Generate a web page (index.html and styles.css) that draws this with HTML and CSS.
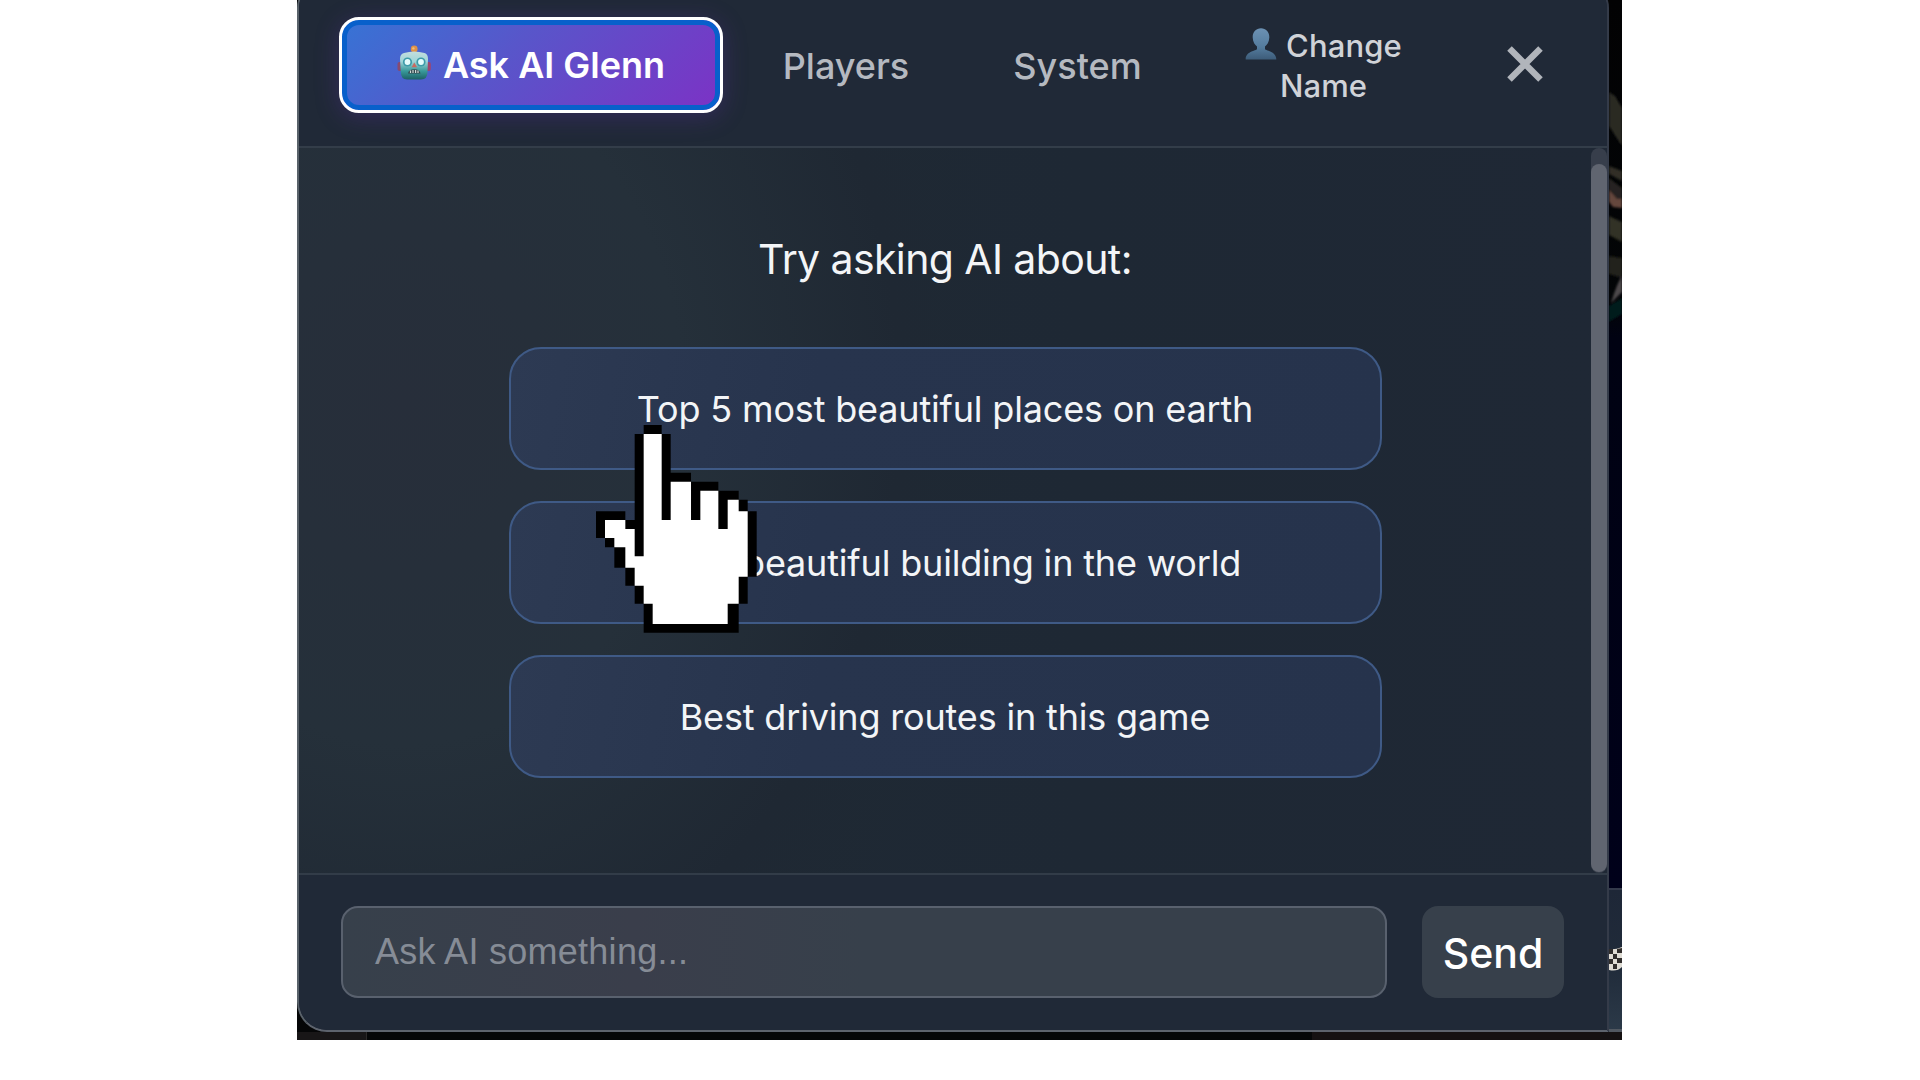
FILE: index.html
```html
<!DOCTYPE html>
<html lang="en">
<head>
<meta charset="utf-8">
<title>Ask AI Glenn</title>
<link rel="stylesheet" href="styles.css">
</head>
<body>
<div class="stage">
  <main class="panel">
    <header class="tabs">
      <button class="tab tab-active">
        <svg class="robot" viewBox="0 0 34 36" width="34" height="36">
          <defs>
            <linearGradient id="face" x1="0" y1="0" x2="0" y2="1"><stop offset="0" stop-color="#c3dedd"/><stop offset=".35" stop-color="#a0d5d8"/><stop offset=".7" stop-color="#38999a"/><stop offset="1" stop-color="#1d6164"/></linearGradient>
          </defs>
          <rect x="15.3" y="5" width="4" height="5" fill="#9b6543"/>
          <circle cx="17.2" cy="4" r="3.4" fill="#dd9148"/><circle cx="16.4" cy="3.4" r="1.2" fill="#f5bd77"/>
          <rect x=".5" y="17" width="5" height="9" rx="2" fill="#874a70"/>
          <rect x="28.8" y="17" width="5" height="9" rx="2" fill="#a0446c"/>
          <path d="M7 8Q17 5 27.500 8Q31 9 31 14L30.500 27Q30.500 34.500 24 34.500H10Q4 34.500 3.800 27L3 14Q3 9 7 8Z" fill="url(#face)"/>
          <circle cx="10.500" cy="17" r="4.600" fill="#3d9ba8"/><circle cx="24" cy="17" r="4.600" fill="#3d9ba8"/>
          <circle cx="10.500" cy="17" r="2.900" fill="#e5fcfc"/><circle cx="24" cy="17" r="2.900" fill="#e5fcfc"/>
          <path d="M17.300 17.500L20 22.200H14.600Z" fill="#c96961"/>
          <path d="M11 28.500Q12 24.300 17.300 24.300T23.500 28.500Z" fill="#34494f"/>
          <path d="M13.500 25.500v2.400M16 25v2.900M18.600 25v2.900M21 25.500v2.400" stroke="#cfdcd8" stroke-width="1.200"/>
        </svg>
        <span>Ask AI Glenn</span>
      </button>
      <button class="tab"><span>Players</span></button>
      <button class="tab"><span>System</span></button>
      <button class="tab tab-name">
        <span class="name-row">
          <svg viewBox="0 0 32 32" width="32" height="32">
            <defs><linearGradient id="bust" x1="0" y1="0" x2="0" y2="1"><stop offset="0" stop-color="#6c91b3"/><stop offset=".6" stop-color="#547c9e"/><stop offset="1" stop-color="#3d5c79"/></linearGradient></defs>
            <path d="M16 .3C21 .3 24.500 4 24.300 9.500C24.200 14 22 17 20 18.500V21C20.500 23 31.500 23 31.300 31.500H.7C.5 23 11.500 23 12 21V18.500C10 17 7.800 14 7.700 9.500C7.500 4 11 .3 16 .3Z" fill="url(#bust)"/>
          </svg>
          <span>Change</span>
        </span>
        <span>Name</span>
      </button>
      <button class="close" aria-label="Close">
        <svg viewBox="0 0 36 36" width="36" height="36"><path d="M2.500 2.500L33.500 33.500M33.500 2.500L2.500 33.500" stroke="#b1b5bb" stroke-width="6.400"/></svg>
      </button>
    </header>
    <section class="chat">
      <div class="prompts">
        <h2>Try asking AI about:</h2>
        <button class="prompt"><span>Top 5 most beautiful places on earth</span></button>
        <button class="prompt"><span>Most beautiful building in the world</span></button>
        <button class="prompt"><span>Best driving routes in this game</span></button>
      </div>
      <div class="scroll"><div class="thumb"></div></div>
    </section>
    <footer class="composer">
      <div class="field"><span>Ask AI something...</span></div>
      <button class="send"><span>Send</span></button>
    </footer>
  </main>
  <aside class="scene">
    <svg class="rocks" viewBox="0 0 13 888" width="13" height="888">
      <defs>
        <linearGradient id="night" x1="0" y1="0" x2="0" y2="1"><stop offset="0" stop-color="#020203"/><stop offset=".34" stop-color="#030507"/><stop offset=".38" stop-color="#000212"/><stop offset="1" stop-color="#00011a"/></linearGradient>
        <filter id="soft"><feGaussianBlur stdDeviation="1"/></filter>
      </defs>
      <rect width="13" height="888" fill="url(#night)"/>
      <g filter="url(#soft)">
        <path d="M0 92L6 96L13 108V146L0 126Z" fill="#2a2924"/>
        <path d="M0 166L13 171V181L0 174Z" fill="#302f28"/>
        <path d="M0 178L13 188V202L0 194Z" fill="#252420"/>
        <path d="M0 190L8 199L13 199V208L4 207L0 202Z" fill="#65463e"/>
        <path d="M0 216L13 222V242L0 235Z" fill="#303025"/>
        <path d="M0 256L13 258V278L0 274Z" fill="#20211a"/>
        <path d="M13 276Q8 283 2 303L13 292Z" fill="#4d484b"/>
        <path d="M0 306L13 298V314L0 322Z" fill="#041a1e"/>
      </g>
    </svg>
    <div class="hud">
      <svg viewBox="0 0 13 26" width="13" height="26">
        <path d="M0 2Q6 3 13 0V20Q8 25 0 23Z" fill="#dedbd3"/>
        <path d="M0 2h4v5H0ZM8 2l5-1v5H8ZM4 7h4v5H4ZM0 12h4v5H0ZM8 11h5v5H8ZM4 17h4v5H4Z" fill="#302d2c"/>
      </svg>
    </div>
  </aside>
  <div class="ground"><i></i><b></b></div>
  <svg class="pointer" viewBox="49 76 482 623">
    <path d="M192 76H246V103H273V219H334V246H416V273H477V300H504V335H531V531H504V612H477V699H192V612H165V558H137V504H104V443H76V415H49V335H137V361H165V103H192Z" fill="#000"/>
    <path d="M192 103H246V361H273V246H334V361H362V273H416V388H444V300H477V335H504V531H477V612H444V673H219V612H192V558H165V504H137V443H104V415H76V361H137V388H165V470H192Z" fill="#fff"/>
  </svg>
</div>
</body>
</html>
```
FILE: styles.css
```css
* { box-sizing: border-box; }
body { margin: 0; height: 1080px; background: #fff; overflow: hidden; font-family: Inter, "Liberation Sans", sans-serif; }
button { font: inherit; border: 0; padding: 0; margin: 0; background: none; color: inherit; }
span { white-space: nowrap; }
svg { display: block; flex: none; }
.stage { position: relative; width: 1325px; height: 1040px; margin-left: 297px; overflow: hidden; background: #050607; display: grid; grid-template-columns: 1312px 13px; grid-template-rows: 1032px 8px; }
.panel { height: 1052px; margin-top: -20px; border: 2px solid #4a525e; border-left-color: #59626a; border-bottom-color: #5d636d; border-right-color: #343b49; border-radius: 28px 28px 0 30px; background: #202937; overflow: hidden; display: grid; grid-template-rows: 166px 725px 1fr; }
.tabs { border-bottom: 2px solid #333d49; padding: 18px 0 0 40px; display: grid; grid-template-columns: 384px 246px 217px 275px 127px; background: #202937; }
.tab { height: 94px; margin-top: 19px; display: flex; align-items: center; justify-content: center; font-size: 36px; font-weight: 500; line-height: 44px; color: #b5b9c0; }
.tab-active { margin-top: 17px; height: 96px; border: 3px solid #fff; border-radius: 20px; color: #fff; font-weight: 600; background: linear-gradient(135deg, #3674d5 0%, #5856ca 42%, #7c32c5 100%); box-shadow: inset 0 0 0 5px #0860cb, 0 4px 24px rgba(100, 50, 180, .3); gap: 12px; }
.robot { margin-top: -5px; }
.tab-name { flex-direction: column; font-size: 31px; line-height: 40.5px; color: #d0d3d8; }
.name-row { display: flex; gap: 9px; letter-spacing: .15px; }
.name-row svg { margin-top: 2px; }
.close { display: flex; align-items: center; justify-content: center; height: 94px; margin-top: 17px; }
.chat { display: grid; grid-template-columns: 1292px 16px; background: radial-gradient(ellipse 620px 760px at 8% 35%, #272e3a 0, #25303a 45%, #1f2833 80%, transparent), linear-gradient(90deg, #202a34, #1e2834 60%, #1f2835); }
.prompts { display: flex; flex-direction: column; align-items: center; gap: 31px; padding: 86px 0 0; color: #f3f5f7; }
h2 { margin: 0; height: 82px; font-size: 41px; line-height: 50px; font-weight: 400; letter-spacing: -.6px; }
.prompt { width: 873px; height: 123px; flex: none; border: 2px solid #3f5a86; border-radius: 32px; background: linear-gradient(100deg, #2d3a53, #27344d 35%, #26334c); font-size: 36px; line-height: 44px; letter-spacing: -.17px; }
.scroll { background: #373e4b; border-radius: 8px; padding-top: 16px; }
.thumb { height: 708px; border-radius: 8px; background: #606570; }
.composer { border-top: 2px solid #323c48; padding: 31px 43px 0 43px; display: flex; justify-content: space-between; background: #202937; }
.field { width: 1046px; height: 92px; margin-left: -1px; border: 2px solid #59616e; border-radius: 17px; background: linear-gradient(90deg, #37404b, #3a3e4b 28%, #37404b 50%); padding-left: 32px; font: 36px/88px "Liberation Sans", Arial, sans-serif; letter-spacing: .27px; color: #868c96; }
.send { width: 142px; height: 92px; border-radius: 16px; background: #37404b; color: #fff; font-size: 41px; font-weight: 500; line-height: 94px; }
.scene { height: 1032px; overflow: hidden; display: flex; flex-direction: column; }
.hud { height: 144px; border-top: 2px solid #343a4b; border-bottom: 3px solid #515861; background: linear-gradient(#1e2737, #202b3a 55%, #2b3948); padding-top: 57px; }
.ground { grid-column: 1 / 3; display: grid; grid-template-columns: 70px 1fr 310px; }
.ground i { background: #181617; border-right: 1px solid #2b2929; }
.ground b { grid-column: 3; background: #151112; }
.pointer { position: absolute; left: 299.300px; top: 425.300px; width: 160.700px; height: 207.700px; }
```
